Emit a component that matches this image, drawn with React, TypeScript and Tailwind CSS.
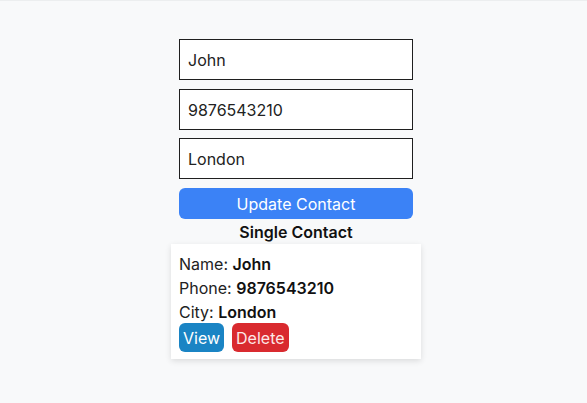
import React from "react";

export default function App() {
  return (
    <div
      className="min-h-[403px] w-full bg-[#f8f9fa] border-t border-[#eceeef]"
      style={{ fontFamily: "Inter, 'Noto Sans', sans-serif" }}
    >
      <div className="flex justify-center pl-[5px] pt-[38px]">
        <div className="flex w-[250px] flex-col">
          <div className="flex flex-col px-2">
            <input
              readOnly
              value="John"
              className="h-[41px] w-full border border-[#1f1f1f] bg-white px-[8px] text-base text-[#222] outline-none"
            />
            <input
              readOnly
              value="9876543210"
              className="mt-[9px] h-[41px] w-full border border-[#1f1f1f] bg-white px-[8px] text-base text-[#222] outline-none"
            />
            <input
              readOnly
              value="London"
              className="mt-[8px] h-[41px] w-full border border-[#1f1f1f] bg-white px-[8px] text-base text-[#222] outline-none"
            />
            <button className="mt-[9px] h-[31px] w-full rounded-md bg-[#3b82f6] text-base leading-none text-white">
              Update Contact
            </button>
          </div>
          <div className="mt-[1px] h-[24px] text-center text-base font-semibold leading-6 text-[#111]">
            Single Contact
          </div>
          <div className="bg-white px-2 pb-[7px] pt-[8px] shadow-[0_2px_6px_rgba(0,0,0,0.12)]">
            <div className="text-base leading-6 text-[#222]">
              Name: <span className="font-semibold text-[#111]">John</span>
            </div>
            <div className="text-base leading-6 text-[#222]">
              Phone: <span className="font-semibold text-[#111]">9876543210</span>
            </div>
            <div className="text-base leading-6 text-[#222]">
              City: <span className="font-semibold text-[#111]">London</span>
            </div>
            <div className="mt-[-1px] flex gap-2">
              <button className="h-[29px] rounded-md bg-[#1a84c4] px-1 text-base leading-none text-white">
                View
              </button>
              <button className="h-[29px] rounded-md bg-[#d92a2f] px-1 text-base leading-none text-[#fde8e8]">
                Delete
              </button>
            </div>
          </div>
        </div>
      </div>
    </div>
  );
}
